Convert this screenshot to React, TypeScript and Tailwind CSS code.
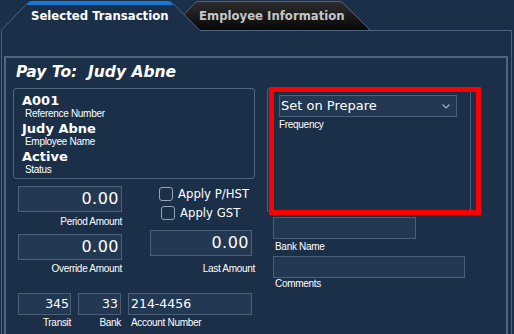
import { ReactNode } from "react";

const dejavu = "font-['DejaVu_Sans',Verdana,sans-serif]";
const label =
  "font-['Liberation_Sans',Arial,sans-serif] text-[10px] tracking-[-0.3px] text-white whitespace-nowrap";
const field = "box-border border border-[#4a5f78] bg-[#233852] text-white";

const InfoItem = ({ value, caption }: { value: string; caption: string }) => (
  <div>
    <div className={`${dejavu} font-bold text-[13px] leading-[14px] text-white`}>{value}</div>
    <div className={`${label} leading-[11px] ml-[3px]`}>{caption}</div>
  </div>
);

const Check = ({ text, className }: { text: string; className?: string }) => (
  <div className={`flex items-center gap-[5px] ${className ?? ""}`}>
    <span className="box-border w-[14px] h-[14px] rounded-[3px] border border-[#95a3b5]" />
    <span className={`${dejavu} text-[11.7px] leading-[14px] text-white whitespace-nowrap`}>{text}</span>
  </div>
);

const Amount = ({ value, className }: { value: string; className?: string }) => (
  <div
    className={`${field} ${dejavu} h-[26px] text-right pr-[2px] text-[16px] leading-[24px] tracking-[0.5px] ${className ?? ""}`}
  >
    {value}
  </div>
);

const Small = ({ children, className }: { children?: ReactNode; className?: string }) => (
  <div
    className={`${field} ${dejavu} h-[22px] text-[12.5px] leading-[20px] ${className ?? ""}`}
  >
    {children}
  </div>
);

const App = () => {
  return (
    <div className="relative w-[514px] h-[334px] overflow-hidden bg-[#1b2f48]">
      {/* tabs */}
      <div className="relative h-[31px]">
        <svg className="absolute inset-0" width="514" height="31" viewBox="0 0 514 31">
          <defs>
            <linearGradient id="tabOff" x1="0" y1="0" x2="0" y2="1">
              <stop offset="0" stopColor="#2f2f2f" />
              <stop offset="1" stopColor="#070707" />
            </linearGradient>
          </defs>
          <path d="M169,30 L196,2 Q197,1 199,1 L339,1 Q341,1 342,2 L370,30 Z" fill="url(#tabOff)" />
          <path
            d="M169,30 L196,2 Q197,1.5 199,1.5 L339,1.5 Q341,1.5 342,2 L370,30"
            fill="none"
            stroke="#59626d"
          />
          <path d="M0,30.5 L27,2 L173,2 L200,30.5 Z" fill="#1b2f48" />
          <path
            d="M1,30.5 L27.5,3 M172.5,3 L200,30.5 L511.5,30.5 L511.5,31"
            fill="none"
            stroke="#4a6382"
          />
          <path d="M27,5 Q28,1 32,1 L168,1 Q172,1 173,5 Z" fill="#1478d4" />
        </svg>
        <div className={`relative flex pt-[9px] ${dejavu} font-bold text-[11.7px] leading-[14px]`}>
          <span className="ml-[31px] w-[168px] text-white">Selected Transaction</span>
          <span className="text-[#c4c6c9]">Employee Information</span>
        </div>
      </div>

      {/* panel */}
      <div className="ml-px w-[511px] h-[303px] border-x border-[#4a6382] pt-[25px]">
        <div className="ml-[2px] w-[504px] h-[278px] border-2 border-b-0 border-[#4d6580]">
          <div
            className={`h-[30px] pl-[10px] pt-[5px] ${dejavu} font-bold italic text-[15.5px] leading-[18px] text-white whitespace-pre`}
          >
            Pay To:  Judy Abne
          </div>

          <div className="flex">
            {/* left column */}
            <div className="ml-[7px] w-[242px]">
              <div className="box-border h-[91px] border border-[#4f6682] rounded-[3px] pt-[5px] pl-[8px] flex flex-col gap-[3px]">
                <InfoItem value="A001" caption="Reference Number" />
                <InfoItem value="Judy Abne" caption="Employee Name" />
                <InfoItem value="Active" caption="Status" />
              </div>

              <div className="flex items-start mt-[7px]">
                <div className="ml-[5px] w-[104px] flex flex-col">
                  <Amount value="0.00" />
                  <div className={`${label} leading-[12px] mt-[4px] text-right`}>Period Amount</div>
                </div>
                <div className="ml-[37px] mt-[1px] flex flex-col gap-[5px]">
                  <Check text="Apply P/HST" />
                  <Check text="Apply GST" className="ml-[2px]" />
                </div>
              </div>

              <div className="flex items-start mt-[2px]">
                <div className="ml-[5px] w-[104px] mt-[4px] flex flex-col">
                  <Amount value="0.00" />
                  <div className={`${label} leading-[12px] mt-[3px] text-right`}>Override Amount</div>
                </div>
                <div className="ml-[28px] w-[105px] flex flex-col">
                  <Amount value="0.00" className="w-[102px]" />
                  <div className={`${label} leading-[12px] mt-[7px] text-right`}>Last Amount</div>
                </div>
              </div>

              <div className="flex items-start gap-[7px] ml-[5px] mt-[18px]">
                <div className="w-[53px] flex flex-col">
                  <Small className="text-right pr-[1px]">345</Small>
                  <div className={`${label} leading-[12px] mt-[2px] text-right`}>Transit</div>
                </div>
                <div className="w-[43px] flex flex-col">
                  <Small className="text-right pr-[2px]">33</Small>
                  <div className={`${label} leading-[12px] mt-[2px] text-right`}>Bank</div>
                </div>
                <div className="w-[124px] flex flex-col">
                  <Small className="pl-[2px]">214-4456</Small>
                  <div className={`${label} leading-[12px] mt-[2px] pl-[3px]`}>Account Number</div>
                </div>
              </div>
            </div>

            {/* right column */}
            <div className="ml-[12px] w-[204px]">
              <div className="box-border h-[124px] border border-[#4a6078] rounded-[2px] pt-[6px] pl-[11px]">
                <div
                  className={`${field} w-[178px] h-[22px] flex items-center justify-between pl-[1px] pr-[6px]`}
                >
                  <span className={`${dejavu} text-[13px] leading-[20px]`}>Set on Prepare</span>
                  <svg width="8" height="5" viewBox="0 0 8 5" className="mt-[1px]">
                    <path d="M0.5,0.5 L4,4 L7.5,0.5" fill="none" stroke="#a4afbd" strokeWidth="1.2" />
                  </svg>
                </div>
                <div className={`${label} leading-[12px] mt-[2px]`}>Frequency</div>
              </div>
              <Small className="ml-[6px] mt-[5px] w-[143px]" />
              <div className={`${label} leading-[12px] mt-[2px] ml-[8px]`}>Bank Name</div>
              <Small className="ml-[6px] mt-[3px] w-[192px]" />
              <div className={`${label} leading-[12px] ml-[8px]`}>Comments</div>
            </div>
          </div>
        </div>
      </div>

      {/* highlight annotation */}
      <div className="absolute left-[269px] top-[87px] w-[212px] h-[128px] border-[5px] border-[#ff0000]" />
    </div>
  );
};

export default App;
